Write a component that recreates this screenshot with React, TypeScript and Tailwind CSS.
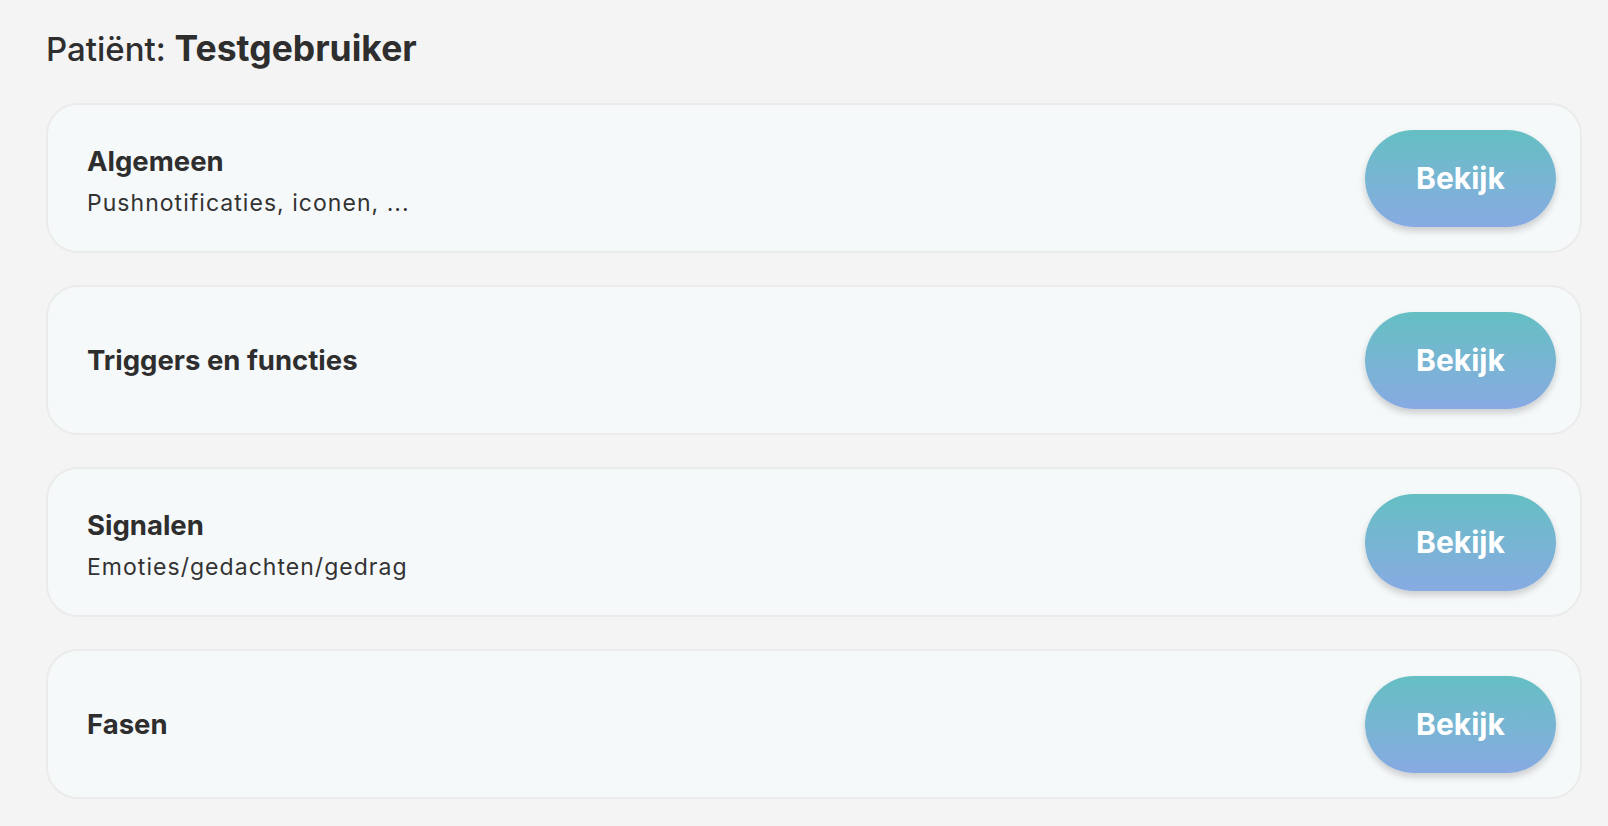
const sections = [
  { title: "Algemeen", subtitle: "Pushnotificaties, iconen, ..." },
  { title: "Triggers en functies" },
  { title: "Signalen", subtitle: "Emoties/gedachten/gedrag" },
  { title: "Fasen" },
];

const SectionCard = ({ title, subtitle }: { title: string; subtitle?: string }) => (
  <div className="flex h-[150px] items-center justify-between rounded-[32px] border-2 border-[#ebebeb] bg-[#f6f9fa] pl-[39px] pr-[24px]">
    <div className={subtitle ? "flex flex-col pt-[5px]" : "flex flex-col"}>
      <span className="text-[27.5px] leading-[34px] font-bold text-[#2e2e2e]">{title}</span>
      {subtitle && (
        <span className="mt-[10px] text-[23px] leading-[30px] tracking-[0.045em] text-[#333333]">
          {subtitle}
        </span>
      )}
    </div>
    <button className="h-[97px] w-[191px] rounded-full bg-linear-to-b from-[#64bfc3] to-[#87aae2] text-[30px] font-bold text-white shadow-[0_4px_7px_rgba(0,0,0,0.18)]">
      Bekijk
    </button>
  </div>
);

export default function App() {
  return (
    <div
      className="min-h-screen bg-[#f4f4f4] pl-[46px] pr-[26px] pt-[31px]"
      style={{ fontFamily: "Inter, 'Noto Sans', sans-serif" }}
    >
      <h1 className="text-[35.5px] leading-[35px] text-[#2e2e2e]">
        <span className="text-[33px] font-medium">Patiënt: </span>
        <span className="font-bold">Testgebruiker</span>
      </h1>
      {/* Instellingen per onderdeel */}
      <div className="mt-[36px] flex flex-col gap-[32px]">
        {sections.map((s) => (
          <SectionCard key={s.title} title={s.title} subtitle={s.subtitle} />
        ))}
      </div>
    </div>
  );
}
